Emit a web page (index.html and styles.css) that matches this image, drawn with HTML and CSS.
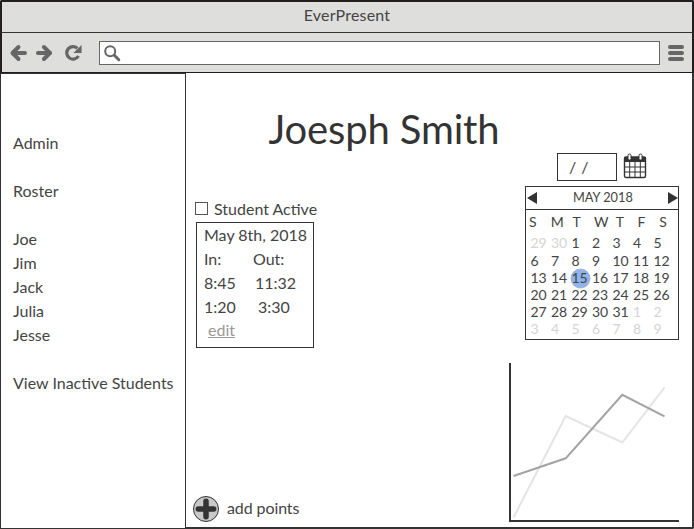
FILE: index.html
```html
<!DOCTYPE html>
<html lang="en">
<head>
<meta charset="utf-8">
<title>EverPresent</title>
<link rel="stylesheet" href="styles.css">
</head>
<body>
<div class="window">
  <header class="titlebar">EverPresent</header>
  <div class="toolbar">
    <svg class="nav" width="76" height="20" viewBox="0 0 76 20" fill="none" stroke="#666" stroke-width="4">
      <path d="M16 10H4" stroke-linecap="round"/><path d="M9.500 4 3.500 10l6 6" stroke-linecap="round" stroke-linejoin="round"/>
      <path d="M29 10h12" stroke-linecap="round"/><path d="M35 4 41 10l-6 6" stroke-linecap="round" stroke-linejoin="round"/>
      <path d="M68.500 5.300A6.300 6.300 0 1 0 69.600 13" stroke-width="3.200"/><path d="M72.700 2v8H64.500z" fill="#666" stroke="none"/>
    </svg>
    <div class="address">
      <svg width="18" height="18" viewBox="0 0 18 18" fill="none" stroke="#666"><circle cx="6.200" cy="6.200" r="5" stroke-width="2"/><path d="m10.300 10.300 4.500 4.500" stroke-width="3" stroke-linecap="round"/></svg>
    </div>
    <div class="menu"><i></i><i></i><i></i></div>
  </div>
  <div class="page">
    <nav class="sidebar">
      <a class="gap">Admin</a>
      <a class="gap">Roster</a>
      <a>Joe</a>
      <a>Jim</a>
      <a>Jack</a>
      <a>Julia</a>
      <a class="gap">Jesse</a>
      <a>View Inactive Students</a>
    </nav>
    <main class="main">
      <h1>Joesph Smith</h1>
      <div class="columns">
        <section class="record">
          <label class="active"><span class="box"></span>Student Active</label>
          <div class="card">
            <div>May 8th, 2018</div>
            <div class="times"><span>In:</span><span>Out:</span></div>
            <div class="times"><span>8:45</span><span class="n1">11:32</span></div>
            <div class="times"><span>1:20</span><span class="n2">3:30</span></div>
            <a class="edit">edit</a>
          </div>
          <div class="add">
            <svg width="28" height="28" viewBox="0 0 28 28"><circle cx="14" cy="14" r="12.500" fill="#c8c8c8" stroke="#333" stroke-width="1"/><path d="M14 6.300v15.400M6.300 14h15.400" stroke="#333" stroke-width="5.500" stroke-linecap="round"/></svg>
            <span>add points</span>
          </div>
        </section>
        <section class="side">
          <div class="date">
            <div class="field">/ /</div>
            <svg width="24" height="26" viewBox="0 0 24 26" fill="none" stroke="#333"><rect x="1.500" y="4" width="21" height="20.500" rx="1.500" stroke-width="1.400"/><path d="M1 4h22v5H1z" fill="#333" stroke="none"/><path d="M1 14h22M1 19h22M6.700 9v15M12 9v15M17.300 9v15"/><rect x="5" y="1" width="3" height="6" rx="1.500" fill="#fff"/><rect x="16" y="1" width="3" height="6" rx="1.500" fill="#fff"/></svg>
          </div>
          <div class="calendar">
            <div class="month"><b class="prev"></b><span>MAY 2018</span><b class="next"></b></div>
            <div class="week"><span>S</span><span>M</span><span>T</span><span>W</span><span>T</span><span>F</span><span>S</span></div>
            <div class="days">
              <span class="out">29</span><span class="out">30</span><span>1</span><span>2</span><span>3</span><span>4</span><span>5</span>
              <span>6</span><span>7</span><span>8</span><span>9</span><span>10</span><span>11</span><span>12</span>
              <span>13</span><span>14</span><span class="today">15</span><span>16</span><span>17</span><span>18</span><span>19</span>
              <span>20</span><span>21</span><span>22</span><span>23</span><span>24</span><span>25</span><span>26</span>
              <span>27</span><span>28</span><span>29</span><span>30</span><span>31</span><span class="out">1</span><span class="out">2</span>
              <span class="out">3</span><span class="out">4</span><span class="out">5</span><span class="out">6</span><span class="out">7</span><span class="out">8</span><span class="out">9</span>
            </div>
          </div>
          <svg class="chart" width="170" height="160" viewBox="0 0 170 160" fill="none" stroke-width="2">
            <path d="M4.500 155.500 56.700 54l56.600 26.500L155.500 25.500" stroke="#e4e4e4"/>
            <path d="M4.500 114 56.700 96.300l56.600-63.500L155.500 54.300" stroke="#a3a3a3"/>
            <path d="M1 1v158h169" stroke="#333"/>
          </svg>
        </section>
      </div>
    </main>
  </div>
</div>
</body>
</html>
```
FILE: styles.css
```css
* { box-sizing: border-box; }
body {
  margin: 0;
  background: #fff;
  color: #444;
  font: 16px/24px Lato, "Liberation Sans", sans-serif;
}
.window {
  display: flex;
  flex-direction: column;
  width: 694px;
  height: 529px;
  overflow: hidden;
}
.titlebar {
  height: 33px;
  border: 2px solid #231f20;
  border-bottom: 1px solid #333;
  border-radius: 2px 2px 0 0;
  background: #dededc;
  text-align: center;
  line-height: 26px;
  letter-spacing: .2px;
}
.toolbar {
  display: flex;
  align-items: center;
  height: 40px;
  padding: 0 8px 0 7px;
  border: solid #231f20;
  border-width: 0 2px 1px;
  background: #dededc;
}
.nav { margin-top: 1px; }
.address {
  display: flex;
  width: 562px;
  height: 24px;
  margin: 1px 8px 0 14px;
  padding: 3px 4px;
  border: 1px solid #666;
  background: #fff;
}
.menu { display: grid; gap: 2px; margin-top: 1px; }
.menu i {
  width: 16px;
  height: 4px;
  border-radius: 2px;
  background: #666;
}
.page { display: flex; height: 456px; }
.sidebar {
  display: flex;
  flex-direction: column;
  width: 186px;
  padding: 57px 0 0 12px;
  border: 1px solid #333;
}
.gap { margin-bottom: 24px; }
.main {
  width: 508px;
  border: solid #333;
  border-width: 0 2px 2px 0;
  border-radius: 0 0 2px 0;
}
h1 {
  height: 79px;
  margin: 0;
  padding: 31px 110px 0 0;
  color: #333;
  text-align: center;
  font-size: 40px;
  font-weight: 400;
  line-height: 50px;
  letter-spacing: -.15px;
}
.columns {
  display: flex;
  justify-content: space-between;
  height: 375px;
  padding: 0 12px 0 7px;
}
.record {
  display: flex;
  flex-direction: column;
  width: 140px;
  padding-top: 45px;
}
.active { display: flex; align-items: center; height: 24px; padding-left: 2px; }
.box { width: 13px; height: 13px; margin: -2px 6px 0 0; border: 1px solid #555; }
.card {
  width: 118px;
  height: 126px;
  margin: 1px 0 0 3px;
  padding: 0 0 0 7px;
  border: 1px solid #333;
}
.times { display: grid; grid-template-columns: 49px 1fr; }
.n1 { padding-left: 2px; }
.n2 { padding-left: 5px; }
.edit { display: block; margin-left: 4px; color: #999; text-decoration: underline; line-height: 22px; }
.add { display: flex; align-items: center; gap: 7px; margin: auto 0 4px -1px; }
.add span { margin-top: -2px; letter-spacing: -.1px; }
.side {
  display: flex;
  flex-direction: column;
  align-items: flex-end;
  width: 184px;
}
.date { display: flex; gap: 6px; height: 28px; margin: 1px 33px 5px 0; }
.field {
  width: 60px;
  height: 28px;
  padding-left: 11px;
  border: 1px solid #333;
  line-height: 26px;
  word-spacing: 1px;
}
.calendar {
  width: 154px;
  height: 154px;
  margin-right: 1px;
  border: 1px solid #333;
  font-size: 14px;
}
.month {
  display: flex;
  justify-content: space-between;
  align-items: center;
  height: 23px;
  padding-left: 1px;
  border-bottom: 1px solid #333;
}
.month span { margin-top: -2px; transform: scaleX(.91); }
.prev, .next { border: solid transparent; border-width: 6px 0; }
.prev { border-right: 10px solid #333; }
.next { border-left: 10px solid #333; }
.week {
  display: grid;
  grid-template-columns: repeat(7, 21.700px);
  padding: 0 0 0 3px;
}
.days {
  display: grid;
  grid-template-columns: repeat(7, 20.500px);
  grid-auto-rows: 17.200px;
  padding: .4px 0 0 4.500px;
  line-height: 17.200px;
  letter-spacing: -.2px;
}
.out { color: #d4d4d4; }
.today {
  width: 19px;
  height: 19px;
  margin: 0 0 0 -1px;
  padding-left: 1px;
  border-radius: 50%;
  background: #8fb4ec;
  box-shadow: 0 0 0 .5px #bbb;
  line-height: 18px;
}
.chart { margin: 22px 1px 0 0; }
```
